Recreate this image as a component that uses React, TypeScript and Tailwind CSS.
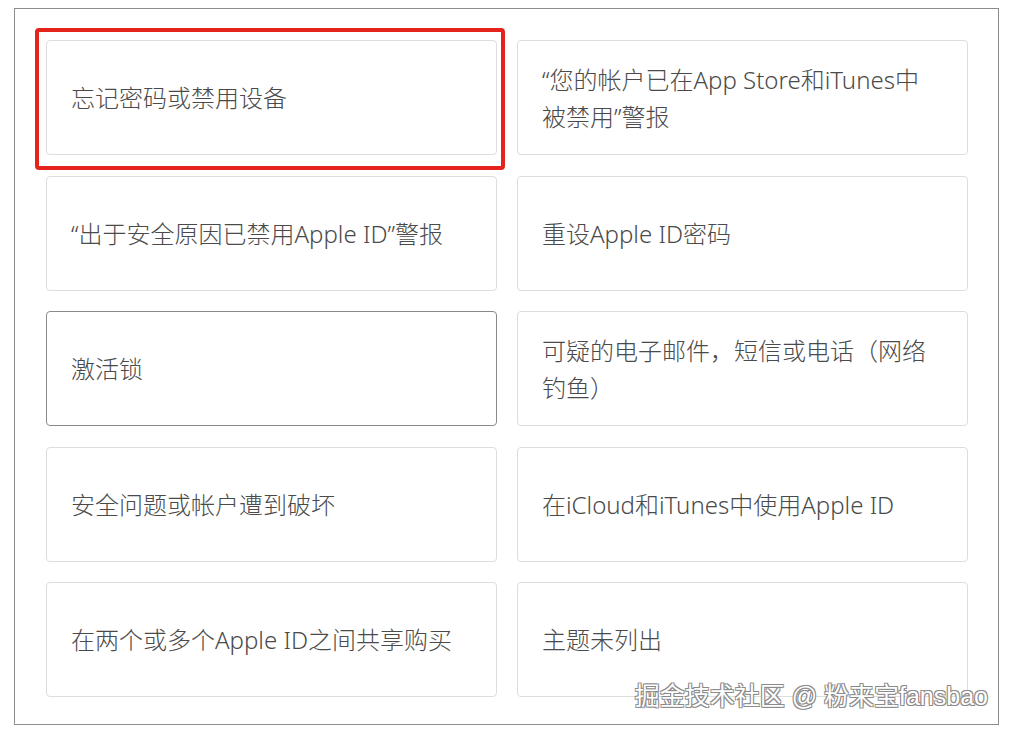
import React from "react";

const items: { text: string; active?: boolean; selected?: boolean }[] = [
  { text: "忘记密码或禁用设备", selected: true },
  { text: "“您的帐户已在App Store和iTunes中被禁用”警报" },
  { text: "“出于安全原因已禁用Apple ID”警报" },
  { text: "重设Apple ID密码" },
  { text: "激活锁", active: true },
  { text: "可疑的电子邮件，短信或电话（网络钓鱼）" },
  { text: "安全问题或帐户遭到破坏" },
  { text: "在iCloud和iTunes中使用Apple ID" },
  { text: "在两个或多个Apple ID之间共享购买" },
  { text: "主题未列出" },
];

export default function App() {
  return (
    <div
      className="relative w-[1011px] h-[732px] bg-white overflow-hidden"
      style={{ fontFamily: '"Noto Sans", "Noto Sans CJK SC", sans-serif' }}
    >
      <div className="ml-[14px] mt-[8px] w-[985px] h-[717px] border border-[#8c8c8c] pt-[31px] pl-[31px]">
        <div className="grid grid-cols-[451px_451px] gap-x-[20px] gap-y-[20.5px]">
          {items.map((it, i) => (
            <div key={i} className="relative">
              <div
                className={
                  "h-[115px] rounded-[4px] border bg-white flex items-center pl-[24px] pr-[34px] text-[24px] leading-[37px] font-light text-[#4a4a4a] " +
                  (it.active ? "border-[#8a8a8a]" : "border-[#dddddd]")
                }
              >
                <span>{it.text}</span>
              </div>
              {it.selected && (
                <div className="absolute left-[-11px] right-[-8px] top-[-12px] bottom-[-15px] border-[4px] border-[#e5231d] rounded-[4px] pointer-events-none" />
              )}
            </div>
          ))}
        </div>
      </div>
      <div
        className="absolute right-[23px] top-[682px] text-[25px] leading-[28px] text-white whitespace-nowrap [text-shadow:1px_1px_0_#8a8a8a,-1px_-1px_0_#8a8a8a,1px_-1px_0_#8a8a8a,-1px_1px_0_#8a8a8a]"
        style={{ fontFamily: '"Liberation Sans", "Noto Sans CJK SC", sans-serif' }}
      >
        掘金技术社区 @ 粉来宝fansbao
      </div>
    </div>
  );
}
